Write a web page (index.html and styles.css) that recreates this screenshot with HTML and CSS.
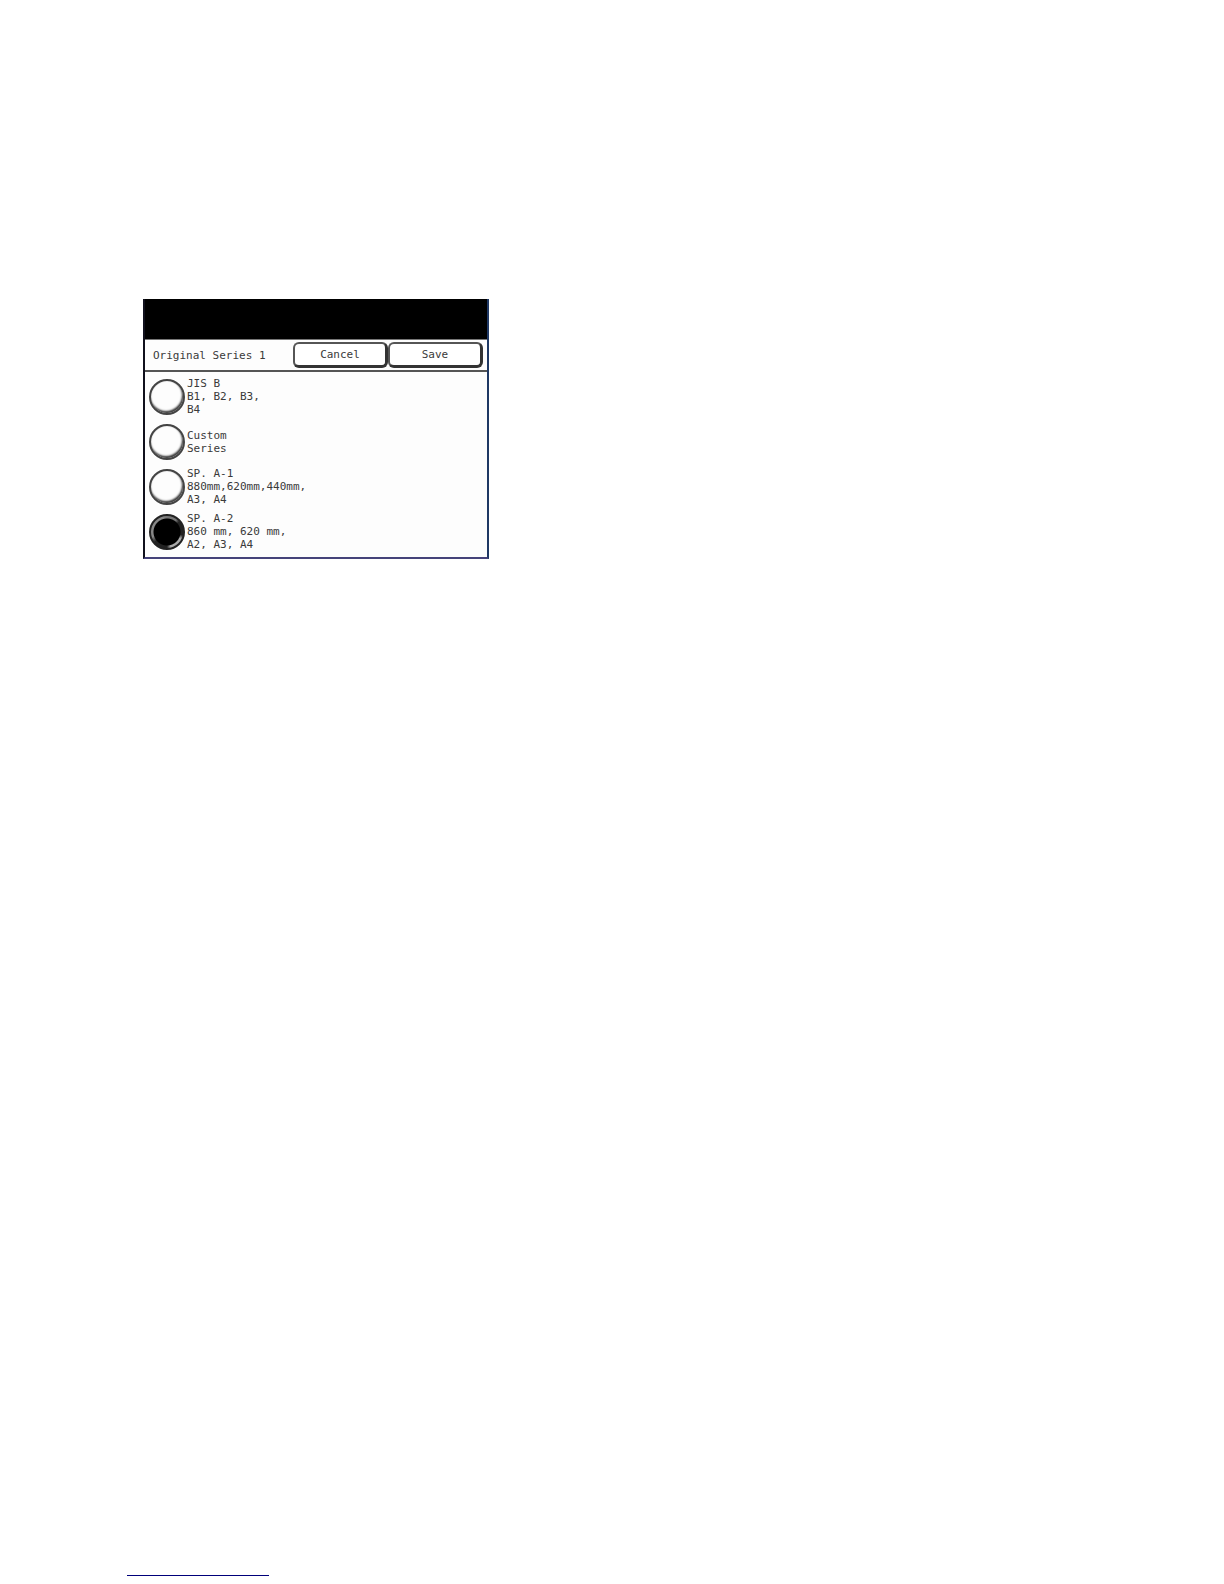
FILE: index.html
```html
<!DOCTYPE html>
<html lang="en">
<head>
<meta charset="utf-8">
<meta name="viewport" content="width=device-width, initial-scale=1">
<title>Original Series 1</title>
<link rel="stylesheet" href="styles.css">
</head>
<body>
<main class="page">
  <form class="panel">
    <div class="status"></div>
    <header class="toolbar">
      <h1 class="title">Original Series 1</h1>
      <button class="key" type="button">Cancel</button>
      <button class="key" type="button">Save</button>
    </header>
    <div class="options" role="radiogroup" aria-label="Original Series 1">
      <label class="option"><input class="knob" type="radio" name="series"><span>JIS B<br>B1, B2, B3,<br>B4</span></label>
      <label class="option"><input class="knob" type="radio" name="series"><span>Custom<br>Series</span></label>
      <label class="option"><input class="knob" type="radio" name="series"><span>SP. A-1<br>880mm,620mm,440mm,<br>A3, A4</span></label>
      <label class="option"><input class="knob" type="radio" name="series" checked><span>SP. A-2<br>860 mm, 620 mm,<br>A2, A3, A4</span></label>
    </div>
  </form>
</main>
<footer class="footer"><hr class="rule"></footer>
</body>
</html>
```
FILE: styles.css
```css
* { box-sizing: border-box; }

body {
  margin: 0;
  min-height: 100vh;
  display: flex;
  flex-direction: column;
  background: #fff;
  color: #3a3a3a;
  font: 11px/13px "DejaVu Sans Mono", "Liberation Mono", monospace;
}

.page {
  flex: 1;
  padding: 299px 24px 24px 143px;
}

.panel {
  width: 100%;
  max-width: 346px;
  background: #fdfdfd;
  border: 2px solid #1f3864;
  border-left-color: #10101c;
  border-top: 0;
  border-bottom-color: #45437a;
}

.status {
  height: 40px;
  background: #000;
}

.toolbar {
  display: flex;
  align-items: center;
  height: 33px;
  padding: 0 4px 0 8px;
  border-top: 1px solid #777;
  border-bottom: 2px solid #555;
}

.title {
  flex: 1;
  margin: 0;
  font: inherit;
  white-space: nowrap;
}

.key {
  width: 95px;
  height: 26px;
  padding: 0;
  border: 2px solid #555;
  border-right: 3px solid #333;
  border-bottom: 3px solid #333;
  border-radius: 6px;
  background: #fff;
  color: inherit;
  font: inherit;
}

.options {
  display: flex;
  flex-direction: column;
  gap: 6px;
  padding: 5px 4px 6px;
}

.option {
  display: flex;
  align-items: center;
  gap: 2px;
  min-height: 39px;
}

.knob {
  appearance: none;
  flex: none;
  width: 36px;
  height: 36px;
  margin: 0;
  border: 2px solid #444;
  border-radius: 50%;
  background: #fdfdfd;
  box-shadow: inset 0 0 1px #999, inset -1px -2px 2px #333;
}

.knob:checked {
  border-color: #222;
  background:
    radial-gradient(circle, #000 13px, transparent 14px),
    conic-gradient(#777 0 10%, #222 14% 28%, #aaa 32% 46%, #222 50% 64%, #888 70% 96%, #777);
  background-origin: border-box;
  box-shadow: none;
}

.footer {
  padding: 0 127px 8px;
}

.rule {
  width: 142px;
  margin: 0;
  border: 0;
  border-top: 1px solid #00007a;
}
```
